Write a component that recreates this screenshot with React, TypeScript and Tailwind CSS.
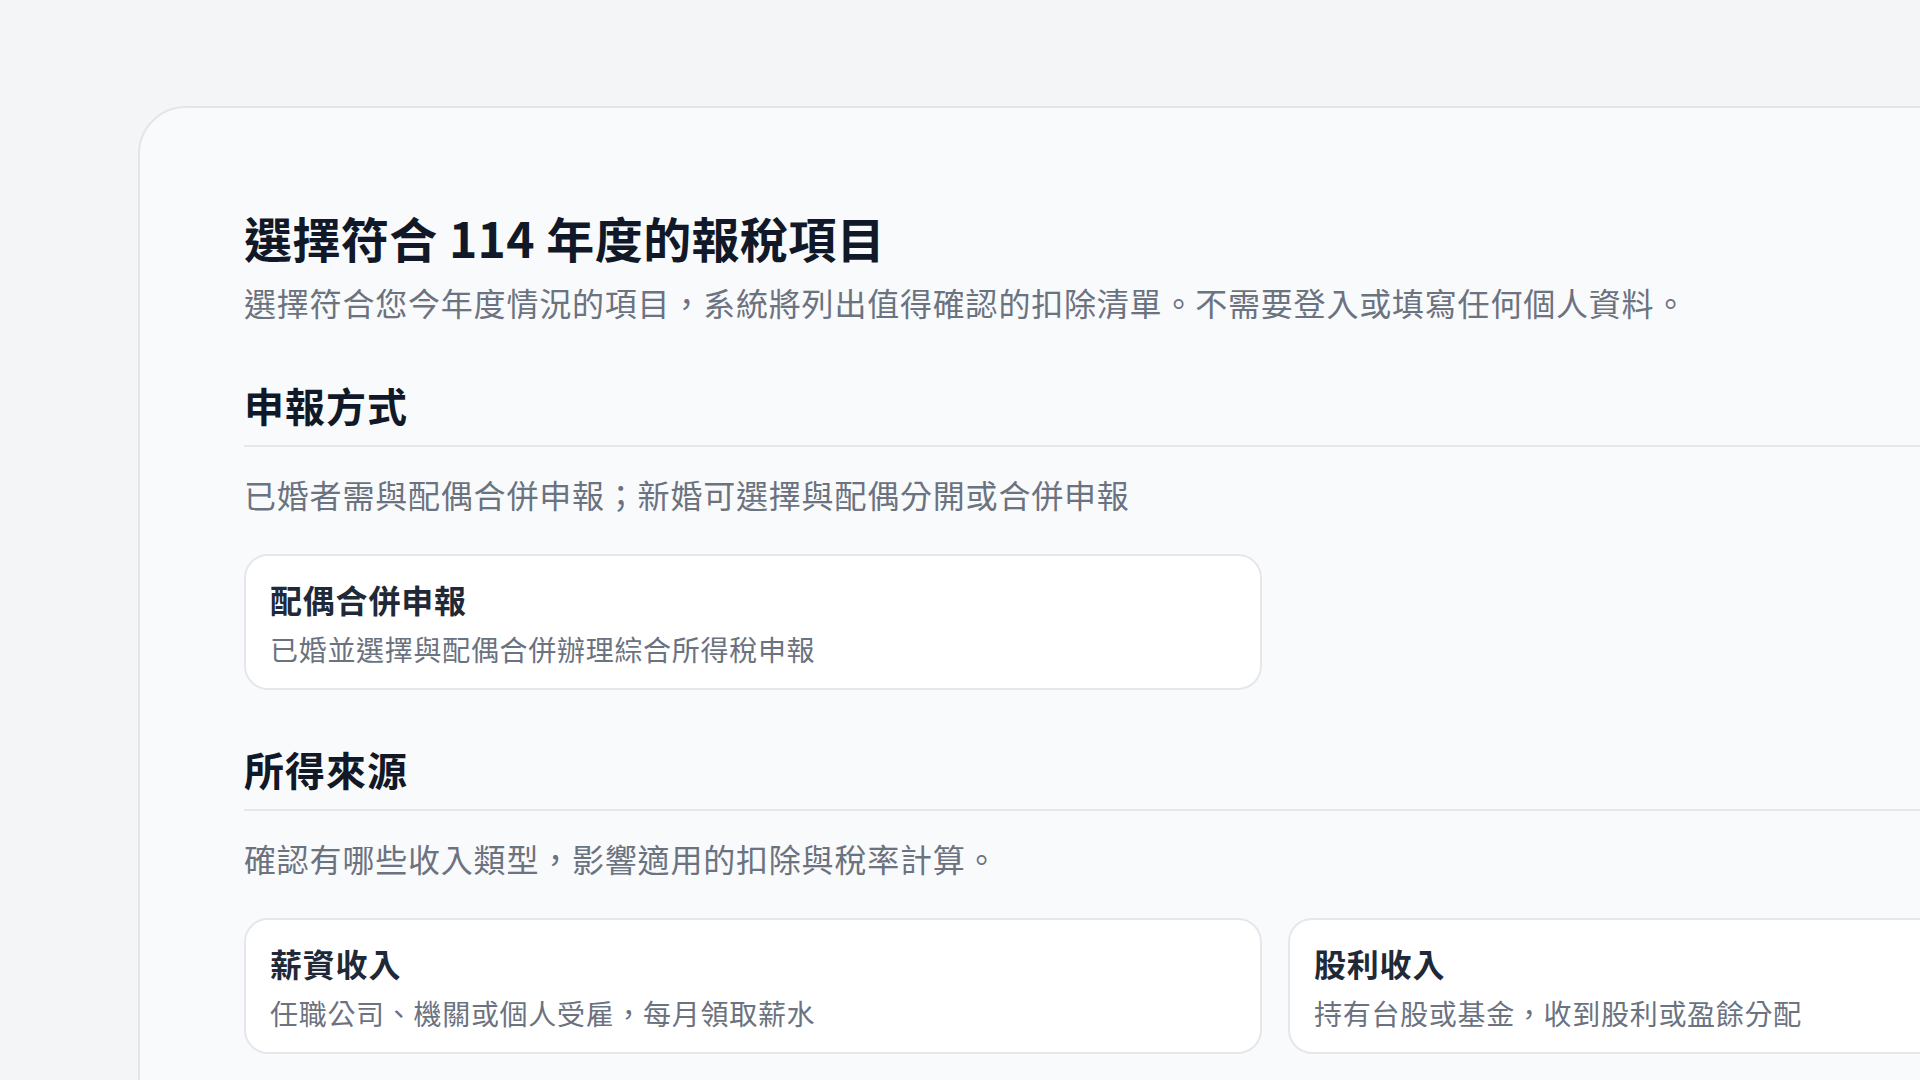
const font = {
  fontFamily: '"Noto Sans CJK TC", "Noto Sans", sans-serif',
};

type Option = { title: string; desc: string };

function OptionCard({ title, desc }: Option) {
  return (
    <div className="rounded-[24px] border-2 border-[#e5e7eb] bg-white px-[24px] pt-[21px] pb-[19px]">
      <div className="text-[32px] leading-[44px] font-bold tracking-wide text-[#1f2937]">{title}</div>
      <div className="mt-[8px] text-[28px] leading-[40px] tracking-wide text-[#6b7280]">{desc}</div>
    </div>
  );
}

function Section({
  title,
  desc,
  descGap,
  children,
}: {
  title: string;
  desc: string;
  descGap: string;
  children: React.ReactNode;
}) {
  return (
    <section className="mt-[51px]">
      <h2 className="border-b-2 border-[#e5e7eb] pb-[12px] text-[40px] leading-[56px] font-bold tracking-wide text-[#111827]">
        {title}
      </h2>
      <p className="mt-[23px] text-[32px] leading-[48px] tracking-wide text-[#6b7280]">{desc}</p>
      <div className={descGap}>{children}</div>
    </section>
  );
}

export default function App() {
  return (
    <div className="h-[1080px] w-[1920px] overflow-hidden bg-[#f4f5f7]" style={font}>
      <div className="ml-[138px] mt-[106px] w-[2400px] rounded-[48px] border-2 border-[#e3e5e9] bg-[#f9fafb] pl-[104px] pt-[97px] pb-[100px]">
        <div className="w-[2062px]">
          <h1 className="text-[48px] leading-[64px] font-bold tracking-[0.4px] text-[#111827]">
            選擇符合 114 年度的報稅項目
          </h1>
          <p className="mt-[9px] text-[32px] leading-[48px] tracking-wide text-[#6b7280]">
            選擇符合您今年度情況的項目，系統將列出值得確認的扣除清單。不需要登入或填寫任何個人資料。
          </p>

          <Section
            title="申報方式"
            desc="已婚者需與配偶合併申報；新婚可選擇與配偶分開或合併申報"
            descGap="mt-[36px]"
          >
            <div className="grid grid-cols-2 gap-[26px]">
              <OptionCard title="配偶合併申報" desc="已婚並選擇與配偶合併辦理綜合所得稅申報" />
            </div>
          </Section>

          <Section
            title="所得來源"
            desc="確認有哪些收入類型，影響適用的扣除與稅率計算。"
            descGap="mt-[36px]"
          >
            <div className="grid grid-cols-2 gap-[26px]">
              <OptionCard title="薪資收入" desc="任職公司、機關或個人受雇，每月領取薪水" />
              <OptionCard title="股利收入" desc="持有台股或基金，收到股利或盈餘分配" />
            </div>
          </Section>
        </div>
      </div>
    </div>
  );
}
